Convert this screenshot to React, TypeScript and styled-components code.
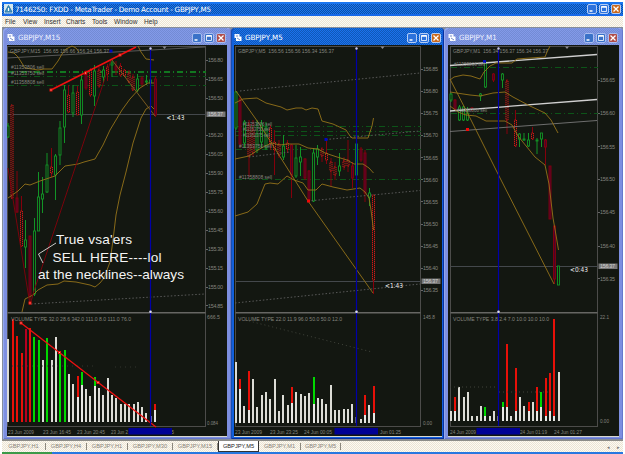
import React from 'react';
import styled, { createGlobalStyle } from 'styled-components';

type Tone = 'red' | 'green' | 'dark';
type Point = [number, number];
// x, high, low, body top, body bottom, tone
type Candle = [number, number, number, number, number, Tone];
// x, top, colour, top of the white part
type Bar = [number, number, string?, number?];
// x, baseline, width, content
type Label = [number, number, number, string];

interface Line {
  points: Point[];
  color: string;
  width?: number;
  dash?: string;
}

interface ChartData {
  left: number;
  width: number;
  plotLeft: number;
  axis: number;
  cursor: number;
  shift: number;
  price: number;
  candles: Candle[];
  volumeBase: number;
  bars: Bar[];
  lines: Line[];
  orders: number[];
  prices: [number, string][];
  labels: Label[];
  timer: Label;
  selected: [number, number];
  anchors: [number, number, string][];
}

const GOLD = '#94731a';
const GREY = '#606060';
const RED = '#e81008';
const LIME = '#00d800';
const tones = { red: '#e41818', green: '#129426', dark: '#85000c' };

const GlobalStyle = createGlobalStyle`
  body {
    margin: 0;
    background: #fff;
    font-family: 'Liberation Sans', Arial, sans-serif;
  }
`;
const Screen = styled.div`
  box-sizing: border-box;
  width: 625px;
  height: 454px;
  padding: 2px 2px 0;
  overflow: hidden;
  display: flex;
  flex-direction: column;
`;
const TitleBar = styled.header`
  box-sizing: border-box;
  height: 14px;
  padding: 0 2px;
  display: flex;
  align-items: center;
  background: repeating-conic-gradient(#0c50a8 0 25%, #1b75f0 0 50%) 0 0 / 2px
    2px;
  box-shadow:
    inset 0 2px #1a75f0,
    inset 0 -2px #1869e8;
  color: #fff;
`;
const AppTitle = styled.h1`
  margin: 0 auto 0 2px;
  font: 7.2px 'DejaVu Sans', sans-serif;
  letter-spacing: -0.27px;
  white-space: pre;
`;
const MenuBar = styled.nav`
  height: 11px;
  display: flex;
  align-items: center;
  background: repeating-conic-gradient(#ede4d2 0 25%, #fbfaf5 0 50%) 0 0 / 2px
    2px;
`;
const MenuItem = styled.span<{ $width: number }>`
  width: ${({ $width }) => $width}px;
  font-size: 6.6px;
  line-height: 10px;
  color: #333;
  &:first-child {
    margin-left: 3px;
  }
`;
const Desktop = styled.main`
  height: 413px;
  padding: 1px 0 0 1px;
  box-sizing: border-box;
  display: grid;
  grid-template-columns: 228px 213px 179px;
  background: #858d9c;
`;
const Frame = styled.section<{ $active?: boolean }>`
  box-sizing: border-box;
  height: 411px;
  padding: 0 4px 3px;
  border-radius: 4px 4px 0 0;
  background: ${({ $active }) => ($active ? '#1260dc' : '#7d8fe0')};
  box-shadow:
    inset 1px 1px ${({ $active }) => ($active ? '#1b4eb0' : '#93a8ee')},
    inset -1px -1px ${({ $active }) => ($active ? '#0830a0' : '#6678cc')};
  ${({ $active }) => $active && 'padding-left: 3px; padding-right: 2px;'}
`;
const FrameTitle = styled.div<{ $active?: boolean }>`
  height: 17px;
  display: flex;
  align-items: center;
  gap: 3px;
  padding: 2px 1px 0 0;
  box-sizing: border-box;
  color: ${({ $active }) => ($active ? '#fff' : '#eef1ff')};
  background: ${({ $active }) =>
    $active
      ? 'repeating-conic-gradient(#1058b8 0 25%, #1b72ee 0 50%) 0 0 / 2px 2px'
      : 'repeating-conic-gradient(#738bd4 0 25%, #839ae8 0 50%) 0 0 / 2px 2px'};
`;
const FrameName = styled.h2`
  margin: 0 auto 0 0;
  font: 7.2px 'DejaVu Sans', sans-serif;
  letter-spacing: -0.1px;
`;
const Controls = styled.div`
  display: flex;
  gap: 2px;
`;
const Control = styled.span<{ $close?: boolean; $muted?: boolean }>`
  box-sizing: border-box;
  width: 10px;
  height: 10px;
  border: 1px solid ${({ $muted }) => ($muted ? '#a9bdf0' : '#b5cdf5')};
  border-radius: 2px;
  background: ${({ $close, $muted }) =>
    $close ? ($muted ? '#b04c48' : '#c8681c') : $muted ? '#3a72c8' : '#2d72dc'};
  svg {
    display: block;
  }
`;
const ChartArea = styled.div`
  height: 391px;
  background: #131711;
  border-bottom: 1px solid #d8d8d0;
  svg {
    display: block;
  }
`;
const Tabs = styled.nav`
  height: 12px;
  display: flex;
  align-items: center;
  border-top: 1px solid #8c8c88;
  box-sizing: border-box;
  background: repeating-conic-gradient(#ede4d2 0 25%, #fbfaf5 0 50%) 0 0 / 2px
    2px;
`;
const Tab = styled.span<{ $width: number; $active?: boolean }>`
  box-sizing: border-box;
  width: ${({ $width }) => $width}px;
  height: ${({ $active }) => ($active ? '11px' : '7px')};
  line-height: ${({ $active }) => ($active ? '10px' : '7px')};
  text-align: center;
  font-size: 5.7px;
  color: ${({ $active }) => ($active ? '#222' : '#8a857c')};
  border-right: 1px solid #8c887e;
  ${({ $active }) =>
    $active &&
    'background: #fff; border: 1px solid #333; border-top: 0;'}
`;
const TabArrows = styled.span`
  margin-left: auto;
  padding-right: 3px;
  font-size: 5px;
  color: #777;
  word-spacing: 6px;
`;
const Taskbar = styled.footer`
  height: 2px;
  background: linear-gradient(90deg, #3c9a48 50px, #2878e0 50px);
`;

const MinimizeIcon = () => (
  <svg width="8" height="8">
    <path d="M1.5 6h3" stroke="#fff" strokeWidth="1.5" />
  </svg>
);
const MaximizeIcon = () => (
  <svg width="8" height="8">
    <path d="M1.5 2v4.5h5V2z" stroke="#fff" fill="none" strokeWidth=".8" />
    <path d="M1.2 1.8h5.6" stroke="#fff" strokeWidth="1.5" />
  </svg>
);
const CloseIcon = () => (
  <svg width="8" height="8">
    <path d="M1.5 1.5l5 5m0-5l-5 5" stroke="#fff" strokeWidth="1.3" />
  </svg>
);
const AppIcon = () => (
  <svg width="9" height="10">
    <rect width="9" height="9.5" fill="#d4e7ee" />
    <path d="M4.5 1.5L8 8H1z" fill="#4f9ac4" stroke="#2877a8" />
    <path d="M4.5 4v3" stroke="#fff" />
  </svg>
);
const ChartIcon = () => (
  <svg width="8" height="9">
    <rect x=".5" y="1" width="5" height="4" fill="#f5f7ff" />
    <rect x="2" y="3.5" width="5.5" height="4.5" fill="#fff" />
    <path d="M2 3h2m-1 2l3 2" stroke="#5572b8" strokeWidth=".8" />
  </svg>
);

const WindowControls = ({ muted }: { muted?: boolean }) => (
  <Controls>
    <Control $muted={muted}>
      <MinimizeIcon />
    </Control>
    <Control $muted={muted}>
      <MaximizeIcon />
    </Control>
    <Control $close $muted={muted}>
      <CloseIcon />
    </Control>
  </Controls>
);

const m15: ChartData = {
  left: 7,
  width: 220,
  plotLeft: 7.5,
  axis: 205.5,
  cursor: 150.5,
  shift: 164.5,
  price: 114.5,
  candles: [
    [8, 123, 138, 126, 137, 'green'],
    [12, 105, 199, 105, 198, 'red'],
    [17, 171, 213, 198, 212, 'dark'],
    [21.5, 196, 247, 211, 246, 'red'],
    [25.5, 220, 268, 240, 247, 'green'],
    [30, 236, 305, 236, 295, 'dark'],
    [34.5, 218, 296, 231, 294, 'green'],
    [38.5, 172, 231, 197, 231, 'green'],
    [42.5, 177, 213, 194, 199, 'green'],
    [47, 153, 193, 165, 192, 'green'],
    [51.5, 148, 177, 167, 173, 'red'],
    [55.5, 154, 200, 156, 175, 'green'],
    [60, 121, 165, 128, 155, 'green'],
    [64.5, 85, 143, 90, 127, 'green'],
    [68.5, 85, 113, 95, 112, 'red'],
    [73, 85, 117, 93, 113, 'green'],
    [77.5, 86, 115, 92, 115, 'red'],
    [81.5, 75, 124, 80, 115, 'green'],
    [86, 70, 90, 73, 88, 'dark'],
    [90.5, 68, 97, 70, 95, 'red'],
    [94.5, 65, 106, 71, 96, 'green'],
    [99, 67, 88, 70, 86, 'red'],
    [103.5, 66, 83, 70, 77, 'green'],
    [107.5, 64, 81, 67, 74, 'red'],
    [112, 61, 77, 63, 65, 'green'],
    [116, 61, 75, 66, 70, 'dark'],
    [120.5, 63, 77, 66, 75, 'red'],
    [124.5, 69, 77, 70, 76, 'red'],
    [129, 70, 83, 73, 82, 'red'],
    [133, 74, 91, 77, 90, 'red'],
    [137.5, 74, 92, 79, 90, 'green'],
    [142, 76, 87, 78, 84, 'dark'],
    [146.5, 75, 85, 81, 82, 'green'],
    [150.5, 76, 84, 80, 83, 'green'],
    [155.5, 76, 117, 79, 115, 'dark'],
  ],
  volumeBase: 422,
  bars: [
    [8, 339], [12.5, 319, RED], [17, 336, RED], [21.5, 353, RED],
    [25.5, 329, '#b80020'], [30, 328, RED], [34, 337, LIME], [38.5, 340, LIME],
    [42.5, 360], [47, 338, LIME], [51.5, 360], [56, 337], [60, 353, LIME],
    [64.5, 350, LIME], [69, 374], [73, 384], [77.5, 376, RED, 397],
    [82, 372, LIME, 385], [86, 389], [90, 396], [94.5, 377, LIME, 386],
    [99, 388], [103, 395], [107.5, 378], [112, 395], [116, 398], [120.5, 404],
    [125, 404], [129, 404], [133.5, 404], [137.5, 402], [142, 407], [146, 413],
    [150.5, 416, '#6670b8'], [155, 404, RED, 410],
  ],
  lines: [
    { color: GREY, points: [[7, 58], [205, 47]] },
    { color: GREY, dash: '1.5 2', points: [[31, 304], [205, 294]] },
    { color: '#353832', dash: '1 4', points: [[12, 366], [95, 366]] },
    { color: '#353832', dash: '1 4', points: [[115, 367], [137, 367]] },
    { color: GOLD, points: [[8, 52], [14, 53], [18, 57], [25, 68], [32, 69], [38, 70], [44, 69], [52, 69], [58, 61], [62, 54], [66, 49], [72, 46], [76, 48], [79, 52]] },
    { color: GOLD, points: [[138, 46], [141, 52], [146, 59], [154, 60]] },
    { color: GOLD, points: [[8, 198], [18, 191], [25, 184], [30, 185], [40, 181], [55, 176], [65, 166], [78, 164], [84, 162], [95, 159], [103, 145], [110, 130], [122, 110], [130, 99], [140, 88], [148, 83], [154, 83]] },
    { color: GOLD, points: [[22, 312], [25, 299], [33, 295], [38, 290], [47, 285], [58, 284], [64, 281], [76, 282], [90, 285], [95, 287], [100, 283], [104, 278], [110, 262], [113, 240], [116, 215], [120, 195], [126, 172], [133, 143], [141, 118], [146, 109], [151, 106], [154, 109]] },
    { color: '#876223', points: [[112, 60], [155, 116]] },
    { color: '#85000c', points: [[8, 168], [30, 305], [34, 291], [111, 60]] },
    { color: '#f01010', width: 1.6, points: [[51, 90], [136, 47]] },
    { color: '#f01010', width: 1.3, points: [[21, 323], [156, 427]] },
    { color: '#ddd', points: [[56, 243], [38.5, 254], [43, 263]] },
  ],
  orders: [71.5, 76.5, 85.5],
  prices: [
    [60, '156.80'], [79, '156.65'], [98, '156.50'], [135, '156.20'],
    [154, '156.05'], [173, '155.90'], [192, '155.75'], [211, '155.60'],
    [230, '155.45'], [249, '155.30'], [268, '155.15'], [287, '155.00'],
    [305.5, '154.85'],
  ],
  labels: [
    [10, 53, 99, 'GBPJPY,M15  156.65 156.66 156.34 156.37'],
    [11, 69, 33, '#11353806 sell'],
    [11, 75, 33, '#11353750 sell'],
    [11, 84, 33, '#11358808 sell'],
    [11, 321, 120, 'VOLUME TYPE 32.0 28.6 342.0 111.0 8.0 111.0 76.0'],
    [207, 319, 13, '666.5'],
    [207, 425, 11, '0.084'],
    [8, 434, 26, '23 Jun 2009'],
    [43, 434, 28, '23 Jun 16:45'],
    [77, 434, 28, '23 Jun 20:45'],
    [111, 434, 17, '23 Jun 2'],
    [171, 434, 3, '5'],
  ],
  timer: [166.5, 120, 18, '<1:43'],
  selected: [128.5, 43.5],
  anchors: [
    [51, 90, RED], [85.5, 73, RED], [120, 55, RED], [30, 303, RED],
    [21, 323, RED], [59.5, 352.5, RED], [98, 382.5, RED], [111, 51, '#0008c0'],
  ],
};

const m5: ChartData = {
  left: 234,
  width: 208,
  plotLeft: 235.5,
  axis: 420.5,
  cursor: 356.5,
  shift: 382.5,
  price: 281.5,
  candles: [
    [236, 91, 130, 92, 128, 'green'],
    [240, 96, 148, 99, 144, 'dark'],
    [244.5, 120, 148, 122, 143, 'green'],
    [249, 120, 177, 124, 156, 'red'],
    [253, 120, 156, 130, 153, 'red'],
    [257, 120, 153, 134, 150, 'green'],
    [261.5, 120, 148, 124, 142, 'green'],
    [266, 122, 150, 128, 148, 'green'],
    [270.5, 125, 150, 128, 144, 'red'],
    [274.5, 130, 175, 142, 150, 'red'],
    [279, 140, 158, 144, 155, 'red'],
    [283.5, 135, 160, 146, 157, 'green'],
    [287.5, 140, 153, 143, 149, 'red'],
    [291.5, 144, 198, 145, 175, 'dark'],
    [296, 145, 178, 158, 176, 'green'],
    [300.5, 147, 176, 157, 162, 'green'],
    [305, 158, 180, 159, 178, 'dark'],
    [309, 170, 202, 171, 200, 'dark'],
    [313.5, 148, 202, 153, 201, 'green'],
    [317.5, 145, 165, 149, 157, 'green'],
    [322, 147, 162, 149, 156, 'red'],
    [326.5, 139, 164, 153, 160, 'red'],
    [331, 158, 186, 162, 171, 'red'],
    [335, 162, 180, 167, 175, 'red'],
    [339.5, 153, 176, 166, 171, 'green'],
    [344, 157, 170, 161, 167, 'red'],
    [348, 140, 172, 160, 166, 'red'],
    [352.5, 162, 188, 166, 178, 'dark'],
    [356.5, 143, 176, 144, 175, 'green'],
    [361, 147, 162, 149, 160, 'dark'],
    [365, 150, 202, 153, 193, 'dark'],
    [369.5, 188, 206, 193, 197, 'green'],
    [373.5, 195, 294, 195, 280, 'red'],
  ],
  volumeBase: 422.5,
  bars: [
    [236, 362], [240, 379, RED, 389], [244, 406], [248.5, 371, RED, 410],
    [253, 379], [257, 407], [261.5, 395], [266, 392], [270, 399], [274.5, 379],
    [279, 411], [283, 395], [287.5, 405], [291.5, 387, RED, 403], [296, 392],
    [300.5, 394], [304.5, 396], [309, 393], [313.5, 377, LIME, 404],
    [317.5, 398], [322, 399], [326, 404], [330.5, 385], [334.5, 410],
    [339, 410], [343.5, 409], [348, 409], [352, 404], [356, 417, '#555a78'],
    [360.5, 419], [365, 395, RED, 415], [369, 405], [373.5, 386, RED, 413],
  ],
  lines: [
    { color: GREY, dash: '1.5 2', points: [[240, 91], [420, 73]] },
    { color: GREY, dash: '1.5 2', points: [[308, 201], [420, 190.5]] },
    { color: GREY, dash: '1.5 2', points: [[326, 139.5], [420, 131]] },
    { color: GREY, dash: '1.5 2', points: [[235, 303], [420, 284]] },
    { color: GREY, dash: '1.5 2', points: [[249, 157], [290, 152]] },
    { color: '#454840', dash: '1 3', points: [[245, 320], [372, 352]] },
    { color: GOLD, points: [[235, 103], [243, 99], [257, 98], [266, 103], [281, 107], [287, 110], [296, 108], [302, 108], [306, 110], [312, 108], [318, 109], [322, 121], [333, 124], [346, 130], [350, 136], [352, 138], [368, 138], [372, 126], [373.5, 118]] },
    { color: GOLD, points: [[236, 91], [260, 125], [308, 201], [373, 293]] },
    { color: GOLD, points: [[235, 159], [249, 156], [258, 150], [265, 146], [272, 143], [280, 145], [287, 144], [299, 144], [308, 148], [318, 149], [325, 153], [337, 157], [347, 160], [354, 164], [363, 164], [369, 168], [373.5, 173]] },
    { color: GOLD, points: [[235, 216], [248, 212], [257, 204], [265, 184], [270, 183], [278, 184], [287, 176], [294, 180], [303, 183], [308, 190], [316, 190], [322, 184], [333, 187], [347, 190], [360, 188], [365, 192], [369, 198], [371, 210], [373.5, 230]] },
  ],
  orders: [126.5, 131.5, 135.5, 149.5, 179.5],
  prices: [
    [69, '156.85'], [91, '156.80'], [113, '156.75'], [135, '156.70'],
    [157.5, '156.65'], [179.5, '156.60'], [201.5, '156.55'], [224, '156.50'],
    [246, '156.45'], [268, '156.40'], [290, '156.35'],
  ],
  labels: [
    [238, 53, 96, 'GBPJPY,M5  156.56 156.56 156.34 156.37'],
    [243, 125.5, 29, '#11353806 sell'],
    [243, 131, 27, '#11353750 sell'],
    [243, 136.5, 27, '#11352275 sell'],
    [239, 148, 33, '#11353750 sell'],
    [239, 179, 33, '#11358808 sell'],
    [238, 321, 104, 'VOLUME TYPE 22.0 11.9 96.0 50.0 50.0 12.0'],
    [423, 319, 12, '145.8'],
    [423, 425, 9, '0.00'],
    [235, 434, 27, '23 Jun 2009'],
    [270, 434, 28, '23 Jun 23:25'],
    [304, 434, 28, '24 Jun 00:05'],
    [380, 434, 21, 'Jun 01:25'],
  ],
  timer: [385, 287.5, 18, '<1:43'],
  selected: [334.5, 43.5],
  anchors: [[308.5, 201, '#f00808'], [326, 139.5, '#0008c0']],
};

const m1: ChartData = {
  left: 448,
  width: 171,
  plotLeft: 450.5,
  axis: 597.5,
  cursor: 498.5,
  shift: 567,
  price: 266.5,
  candles: [
    [451, 93, 102, 94, 100, 'green'],
    [455, 99, 111, 100, 109, 'dark'],
    [459.5, 105, 121, 107, 120, 'green'],
    [463.5, 106, 121, 107, 120, 'green'],
    [467.5, 107, 121, 113, 120, 'green'],
    [472, 107, 110, 108, 110, 'dark'],
    [480.5, 93, 101, 94, 96, 'green'],
    [485.5, 61, 88, 62, 87, 'green'],
    [493.5, 73, 82, 74, 80, 'dark'],
    [502.5, 73, 88, 74, 80, 'green'],
    [507, 79, 134, 81, 120, 'red'],
    [515.5, 110, 147, 120, 146, 'red'],
    [519.5, 133, 147, 134, 139, 'green'],
    [524, 133, 141, 139, 140, 'green'],
    [528.5, 133, 147, 140, 146, 'green'],
    [532.5, 127, 140, 133, 139, 'red'],
    [537, 138, 154, 140, 141, 'green'],
    [541.5, 133, 147, 133, 139, 'green'],
    [545.5, 139, 165, 140, 147, 'dark'],
    [550, 166, 219, 166, 219, 'dark'],
    [554.5, 226, 284, 226, 279, 'dark'],
    [558.5, 266, 285, 266, 285, 'green'],
  ],
  volumeBase: 421,
  bars: [
    [451, 411], [455, 397, RED, 411], [459, 387], [463.5, 397], [468, 392],
    [472, 416], [476.5, 416], [481, 406], [485, 407, LIME, 416], [489.5, 416],
    [494, 411], [498, 416, '#777'], [502.5, 402, LIME, 407],
    [507, 344, RED, 407], [511, 416], [515.5, 368, RED, 411], [519.5, 397],
    [524, 406], [528.5, 402, RED, 411], [532.5, 402], [537, 387, RED, 411],
    [541, 392, LIME, 407], [545.5, 378, RED, 416], [549.5, 373, RED, 411],
    [554, 319, RED, 416], [558.5, 372],
  ],
  lines: [
    { color: '#d0d0d0', width: 1.3, points: [[450, 65.5], [597, 54.5]] },
    { color: '#d0d0d0', width: 1.3, points: [[450, 111], [597, 99.5]] },
    { color: '#777', points: [[450, 131.5], [597, 120.5]] },
    { color: '#454840', dash: '1 3', points: [[450, 387], [497, 387]] },
    { color: '#454840', dash: '1 3', points: [[499, 392], [550, 392]] },
    { color: GOLD, points: [[450, 80], [454, 77], [463, 75], [471, 76], [480, 79], [484, 72], [490, 66], [496, 63], [512, 63], [517, 59], [530, 58], [545, 57], [547, 52], [550, 46]] },
    { color: GOLD, points: [[450, 92], [470, 95], [480, 96], [493, 93], [505, 92], [513, 97], [530, 106], [545, 113], [551, 120], [558, 133]] },
    { color: GOLD, points: [[450, 106], [458, 112], [466, 115], [476, 116], [486, 121], [505, 121], [512, 125], [518, 136], [535, 157], [545, 165], [549, 184], [553, 218], [556, 235], [558.5, 250]] },
    { color: GOLD, points: [[450, 79], [471, 120], [498, 174], [554, 284]] },
  ],
  orders: [67.5, 113.5],
  prices: [
    [80, '156.65'], [113, '156.60'], [146.5, '156.55'], [179, '156.50'],
    [212, '156.45'], [246, '156.40'], [278.5, '156.35'],
  ],
  labels: [
    [453, 53, 95, 'GBPJPY,M1  156.34 156.37 156.34 156.37'],
    [454, 66, 31, '#11353806 sell'],
    [457, 112, 30, '#11358808 sell'],
    [453, 321, 96, 'VOLUME TYPE 3.8 2.4 7.0 10.0 10.0 10.0'],
    [600, 319, 9, '22.1'],
    [600, 423, 9, '0.00'],
    [450, 434, 26, '24 Jun 2009'],
    [520, 434, 27, '24 Jun 01:19'],
    [554, 434, 28, '24 Jun 01:27'],
  ],
  timer: [570, 272, 18, '<0:43'],
  selected: [476.5, 43.5],
  anchors: [[467.5, 129.5, '#f00808'], [484.5, 61.5, '#0008c0']],
};

const AxisText = styled.text`
  font: 5.4px 'Liberation Sans', Arial, sans-serif;
  fill: #85857f;
  white-space: pre;
`;
const TimerText = styled.text`
  font: 6.8px 'DejaVu Sans', sans-serif;
  fill: #e8e8e8;
`;
const NoteText = styled.text`
  font: 13.6px 'Liberation Sans', Arial, sans-serif;
  fill: #f4f4f4;
`;

const Chart = ({
  data,
  children,
}: {
  data: ChartData;
  children?: React.ReactNode;
}) => {
  const { axis, plotLeft, cursor, shift, price, volumeBase } = data;
  const tick = axis + 2.5;
  return (
    <svg
      width={data.width}
      height="391"
      viewBox={`${data.left} 45 ${data.width} 391`}
    >
      <g shapeRendering="crispEdges">
        <path
          d={`M${plotLeft} 46.5H${axis}V426.5H${plotLeft}z`}
          stroke="#4c4c4a"
          fill="none"
        />
        <path d={`M${plotLeft} ${price}H${axis}`} stroke="#44484c" />
        {data.orders.map((y) => (
          <path
            key={y}
            d={`M${plotLeft} ${y}H${axis}`}
            stroke={y === 71.5 ? '#127820' : '#0c5418'}
            strokeWidth={y === 71.5 ? 2 : 1}
            strokeDasharray="6 3 1 3"
          />
        ))}
        {data.prices.map(([y]) => (
          <path key={y} d={`M${axis} ${y}h2`} stroke="#666" />
        ))}
        {data.bars.map(([x, top, color, white]) => (
          <React.Fragment key={x}>
            <rect
              x={x - 1}
              y={top}
              width="2"
              height={volumeBase - top}
              fill={color || '#dcdcd6'}
            />
            {white && (
              <rect
                x={x - 1}
                y={white}
                width="2"
                height={volumeBase - white}
                fill="#e8e8e4"
              />
            )}
          </React.Fragment>
        ))}
      </g>
      {data.candles.map(([x, high, low, top, bottom, tone]) => (
        <g key={x} stroke={tones[tone]}>
          <path
            d={`M${x} ${high}V${top}M${x} ${bottom}V${low}`}
            stroke={tone === 'red' ? tones.dark : tones[tone]}
          />
          <rect
            x={x - 1}
            y={top}
            width="2"
            height={bottom - top}
            fill={tone === 'dark' ? '#4c002c' : '#131711'}
            strokeWidth=".9"
            strokeDasharray={tone === 'red' ? '1.3 .7' : undefined}
          />
        </g>
      ))}
      {data.lines.map(({ points, color, width, dash }, i) => (
        <polyline
          key={i}
          points={points.join(' ')}
          stroke={color}
          strokeWidth={width || 0.9}
          strokeDasharray={dash}
          fill="none"
        />
      ))}
      <path
        d={`M${plotLeft} 312.7H${axis}`}
        stroke="#666663"
        strokeWidth="1.4"
      />
      <rect x={cursor - 0.6} y="47" width="1.2" height="379" fill="#0000a8" />
      <circle cx={cursor} cy="48.5" r="1.2" fill="#ccd" />
      <circle cx={cursor} cy="311.7" r="1.3" fill="#dde" />
      <path d={`M${shift - 2} 46.5h4l-2 2.5z`} fill="#8c8c94" />
      {data.anchors.map(([x, y, color]) => (
        <g key={`${x}-${y}`}>
          <rect x={x - 1.5} y={y - 1.5} width="3" height="3" fill={color} />
          {color === RED && (
            <rect x={x - 0.5} y={y - 0.5} width="1" height="1" fill="#fbb" />
          )}
        </g>
      ))}
      {data.prices.map(([y, value]) => (
        <AxisText key={value} x={tick} y={y + 2} textLength="15">
          {value}
        </AxisText>
      ))}
      <rect x={axis + 1} y={price - 3} width="19" height="5.5" fill="#777" />
      <AxisText
        x={tick}
        y={price + 1.7}
        textLength="15"
        style={{ fill: '#d0d0d0' }}
      >
        156.37
      </AxisText>
      {data.labels.map(([x, y, width, value]) => (
        <AxisText
          key={`${x}-${y}`}
          x={x}
          y={y}
          textLength={width}
          lengthAdjust="spacingAndGlyphs"
        >
          {value}
        </AxisText>
      ))}
      <rect
        x={data.selected[0]}
        y="428"
        width={data.selected[1]}
        height="6.5"
        fill="#000094"
      />
      <TimerText
        x={data.timer[0]}
        y={data.timer[1]}
        textLength={data.timer[2]}
        lengthAdjust="spacingAndGlyphs"
      >
        {data.timer[3]}
      </TimerText>
      {children}
    </svg>
  );
};

const ChartWindow = ({
  name,
  active,
  data,
  children,
}: {
  name: string;
  active?: boolean;
  data: ChartData;
  children?: React.ReactNode;
}) => (
  <Frame $active={active}>
    <FrameTitle $active={active}>
      <ChartIcon />
      <FrameName>{name}</FrameName>
      <WindowControls muted={!active} />
    </FrameTitle>
    <ChartArea>
      <Chart data={data}>{children}</Chart>
    </ChartArea>
  </Frame>
);

const menu: [string, number][] = [
  ['File', 18],
  ['View', 21],
  ['Insert', 22],
  ['Charts', 26],
  ['Tools', 22],
  ['Window', 30],
  ['Help', 20],
];
const tabs: [string, number][] = [
  ['GBPJPY,H1', 44],
  ['GBPJPY,H4', 41],
  ['GBPJPY,H1', 41],
  ['GBPJPY,M30', 45],
  ['GBPJPY,M15', 45],
  ['GBPJPY,M5', 41],
  ['GBPJPY,M1', 42],
  ['GBPJPY,M5', 40],
];

const App = () => (
  <>
    <GlobalStyle />
    <Screen>
      <TitleBar>
        <AppIcon />
        <AppTitle>
          7146250: FXDD - MetaTrader - Demo Account - GBPJPY,M5
        </AppTitle>
        <WindowControls />
      </TitleBar>
      <MenuBar>
        {menu.map(([name, width]) => (
          <MenuItem key={name} $width={width}>
            {name}
          </MenuItem>
        ))}
      </MenuBar>
      <Desktop>
        <ChartWindow name="GBPJPY,M15" data={m15}>
          <NoteText x="56" y="244" textLength="76">
            True vsa'ers
          </NoteText>
          <NoteText x="52.5" y="262" textLength="109">
            SELL HERE----lol
          </NoteText>
          <NoteText x="38" y="279" textLength="146">
            at the necklines--always
          </NoteText>
        </ChartWindow>
        <ChartWindow name="GBPJPY,M5" data={m5} active />
        <ChartWindow name="GBPJPY,M1" data={m1} />
      </Desktop>
      <Tabs>
        {tabs.map(([name, width], i) => (
          <Tab key={i} $width={width} $active={i === 5}>
            {name}
          </Tab>
        ))}
        <TabArrows>◂ ▸</TabArrows>
      </Tabs>
      <Taskbar />
    </Screen>
  </>
);

export default App;
